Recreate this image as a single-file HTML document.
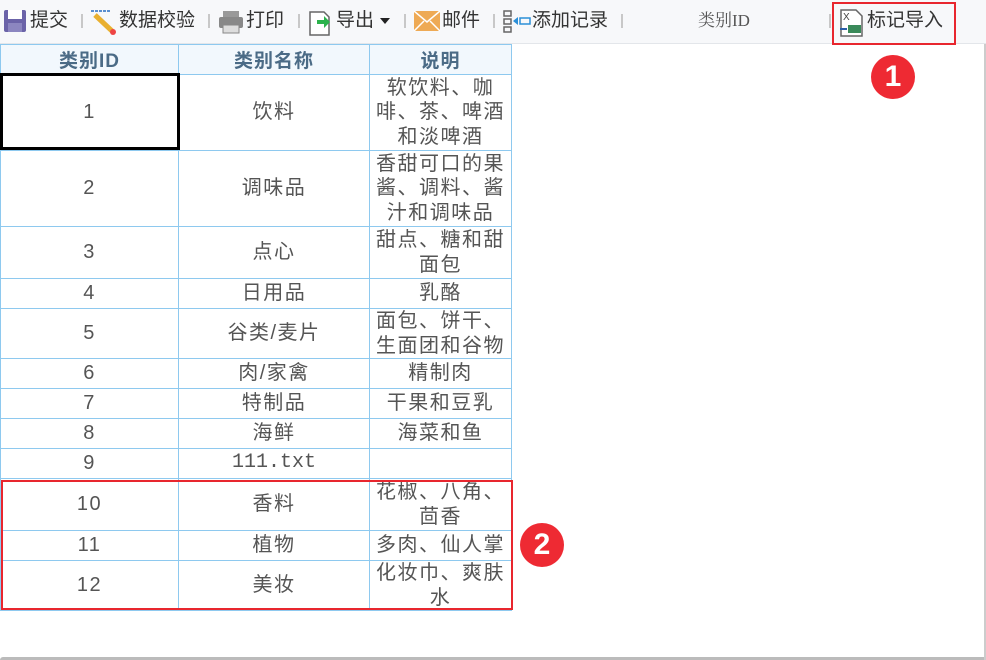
<!DOCTYPE html>
<html><head><meta charset="utf-8"><style>
*{margin:0;padding:0;box-sizing:border-box}
body{width:986px;height:660px;background:#fff;position:relative;overflow:hidden;font-family:"Liberation Sans","Noto Sans CJK SC",sans-serif;color:#333}
.tb{position:absolute;left:0;top:0;width:986px;height:44px;background:#f7f8fa;border-bottom:1px solid #e3e6ea}
.t{position:absolute;top:9px;font-size:19px;line-height:24px;color:#333;white-space:nowrap}
.sep{position:absolute;top:14px;width:2px;height:14px;background:#c8c8c8}
table{position:absolute;left:0;top:44px;border-collapse:collapse;table-layout:fixed}
td{border:1px solid #8ec9ef;text-align:center;vertical-align:middle;font-size:20px;line-height:24.5px;color:#555;padding:0;letter-spacing:1.5px}
th{border:1px solid #8ec9ef;background:#f2f8fd;color:#4b6b86;font-size:19px;font-weight:bold;height:30px;padding:0;letter-spacing:1px}
.m{font-family:"Liberation Mono","Noto Sans CJK SC",monospace;letter-spacing:0}
.badge{position:absolute;width:44px;height:44px;border-radius:50%;background:#ee2a33;color:#fff;font-size:30px;font-weight:bold;text-align:center;line-height:44px}
</style></head><body>
<div class="tb">
 <svg style="position:absolute;left:3px;top:9px" width="24" height="24"><rect x="1" y="1" width="22" height="22" rx="2" fill="#6b63a8"/><rect x="5" y="1" width="14" height="9" fill="#fff"/><rect x="5" y="14" width="14" height="9" fill="#8c86c0"/></svg>
 <div class="t" style="left:30px">提交</div><div class="sep" style="left:81px"></div>
 <svg style="position:absolute;left:90px;top:9px" width="28" height="26"><line x1="1" y1="2" x2="20" y2="2" stroke="#5b8fd0" stroke-width="2" stroke-dasharray="3 1"/><line x1="5" y1="6" x2="22" y2="22" stroke="#e9b030" stroke-width="5"/><circle cx="23" cy="23" r="3" fill="#e44"/></svg>
 <div class="t" style="left:119px">数据校验</div><div class="sep" style="left:208px"></div>
 <svg style="position:absolute;left:218px;top:10px" width="26" height="24"><rect x="5" y="1" width="16" height="6" fill="#999"/><rect x="1" y="7" width="24" height="11" rx="2" fill="#888"/><rect x="5" y="15" width="16" height="8" fill="#ddd" stroke="#888"/></svg>
 <div class="t" style="left:246px">打印</div><div class="sep" style="left:298px"></div>
 <svg style="position:absolute;left:308px;top:8px" width="24" height="28"><path d="M2 4h14l5 5v18H2z" fill="#fff" stroke="#666" stroke-width="1.5"/><path d="M9 12h7v-4l6 6-6 6v-4H9z" fill="#2bb24c"/></svg>
 <div class="t" style="left:336px">导出</div>
 <svg style="position:absolute;left:380px;top:18px" width="10" height="6"><path d="M0 0h10L5 6z" fill="#222"/></svg>
 <div class="sep" style="left:404px"></div>
 <svg style="position:absolute;left:414px;top:11px" width="26" height="20"><rect width="26" height="20" fill="#eeaa55"/><path d="M0 0l13 11L26 0M0 20l10-10M26 20L16 10" stroke="#fff" stroke-width="1.5" fill="none"/></svg>
 <div class="t" style="left:442px">邮件</div><div class="sep" style="left:493px"></div>
 <svg style="position:absolute;left:503px;top:10px" width="28" height="24"><rect x="1" y="1" width="7" height="5" fill="none" stroke="#666" stroke-width="1.5"/><rect x="1" y="9" width="7" height="5" fill="none" stroke="#666" stroke-width="1.5"/><rect x="1" y="17" width="7" height="5" fill="none" stroke="#666" stroke-width="1.5"/><path d="M10 11l5-4v8z" fill="#2b8fd8"/><rect x="17" y="8" width="10" height="6" fill="none" stroke="#2b8fd8" stroke-width="1.5"/></svg>
 <div class="t" style="left:532px">添加记录</div><div class="sep" style="left:621px"></div>
 <div class="t" style="left:698px;font-size:17px;color:#555;font-family:'Liberation Serif','Noto Serif CJK SC',serif">类别ID</div>
 <div class="sep" style="left:829px"></div>
 <div style="position:absolute;left:832px;top:2px;width:124px;height:43px;border:2px solid #e8262e"></div>
 <svg style="position:absolute;left:839px;top:9px" width="26" height="28"><path d="M2 1h15l6 6v20H2z" fill="#fff" stroke="#666" stroke-width="1.5"/><text x="4" y="11" font-size="10" fill="#444" font-family="Liberation Sans">X</text><rect x="9" y="16" width="13" height="8" fill="#3a8a5a"/><path d="M1 20h7" stroke="#2b5fa8" stroke-width="2"/></svg>
 <div class="t" style="left:867px">标记导入</div>
</div>
<div class="badge" style="left:871px;top:55px">1</div>
<div class="badge" style="left:520px;top:523px">2</div>
<table>
<colgroup><col style="width:178px"><col style="width:191px"><col style="width:142px"></colgroup>
<tr><th>类别ID</th><th>类别名称</th><th>说明</th></tr>
<tr style="height:76px"><td>1</td><td>饮料</td><td>软饮料、咖<br>啡、茶、啤酒<br>和淡啤酒</td></tr>
<tr style="height:76px"><td>2</td><td>调味品</td><td>香甜可口的果<br>酱、调料、酱<br>汁和调味品</td></tr>
<tr style="height:52px"><td>3</td><td>点心</td><td>甜点、糖和甜<br>面包</td></tr>
<tr style="height:30px"><td>4</td><td>日用品</td><td>乳酪</td></tr>
<tr style="height:50px"><td>5</td><td>谷类/麦片</td><td>面包、饼干、<br>生面团和谷物</td></tr>
<tr style="height:30px"><td>6</td><td>肉/家禽</td><td>精制肉</td></tr>
<tr style="height:30px"><td>7</td><td>特制品</td><td>干果和豆乳</td></tr>
<tr style="height:30px"><td>8</td><td>海鲜</td><td>海菜和鱼</td></tr>
<tr style="height:30px"><td>9</td><td class="m">111.txt</td><td></td></tr>
<tr style="height:52px"><td>10</td><td>香料</td><td>花椒、八角、<br>茴香</td></tr>
<tr style="height:30px"><td>11</td><td>植物</td><td>多肉、仙人掌</td></tr>
<tr style="height:50px"><td>12</td><td>美妆</td><td>化妆巾、爽肤<br>水</td></tr>
</table>
<div style="position:absolute;left:0;top:73px;width:180px;height:77px;border:3px solid #000"></div>
<div style="position:absolute;left:1px;top:480px;width:512px;height:130px;border:2px solid #e8262e"></div>
<div style="position:absolute;left:0;top:657px;width:986px;height:3px;background:#bbb;border-radius:6px 0 0 0"></div>
<div style="position:absolute;left:984px;top:44px;width:2px;height:616px;background:#ccc"></div>
</body></html>
